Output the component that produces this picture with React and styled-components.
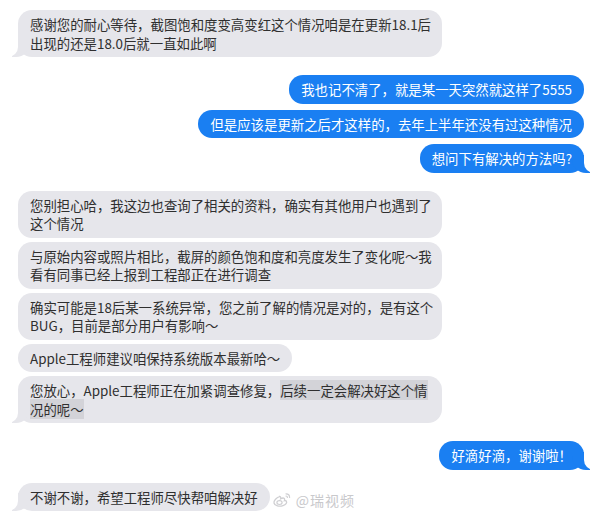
import styled, { createGlobalStyle, css } from 'styled-components';

const GlobalStyle = createGlobalStyle`
  body {
    margin: 0;
    background: #ffffff;
    font-family: "Noto Sans CJK SC", "Noto Sans", sans-serif;
  }
`;

const Thread = styled.div`
  width: 600px;
  height: 520px;
  box-sizing: border-box;
  padding: 10px 16px 0 18px;
  display: flex;
  flex-direction: column;
  overflow: hidden;
`;

const Group = styled.div`
  display: flex;
  flex-direction: column;
  align-items: ${(p) => (p.$mine ? 'flex-end' : 'flex-start')};
  gap: ${(p) => p.$gap || 5}px;
  margin-top: ${(p) => p.$top || 0}px;
`;

const Row = styled.div`
  display: flex;
  align-items: center;
`;

const tailLeft = css`
  &::before,
  &::after {
    content: '';
    position: absolute;
    bottom: 0;
    height: 18px;
  }
  &::before {
    left: -6px;
    width: 18px;
    background: #e6e6eb;
    border-bottom-right-radius: 14px;
  }
  &::after {
    left: -10px;
    width: 10px;
    background: #ffffff;
    border-bottom-right-radius: 10px;
  }
`;

const tailRight = css`
  &::before,
  &::after {
    content: '';
    position: absolute;
    bottom: 0;
    height: 18px;
  }
  &::before {
    right: -6px;
    width: 18px;
    background: #1a7ff2;
    border-bottom-left-radius: 14px;
  }
  &::after {
    right: -10px;
    width: 10px;
    background: #ffffff;
    border-bottom-left-radius: 10px;
  }
`;

const Bubble = styled.div`
  position: relative;
  box-sizing: border-box;
  width: ${(p) => (p.$wide ? '424px' : 'auto')};
  padding: 5px 12px;
  border-radius: 14px;
  font-size: 13.4px;
  line-height: 18.5px;
  white-space: nowrap;
  background: ${(p) => (p.$mine ? '#1a7ff2' : '#e6e6eb')};
  color: ${(p) => (p.$mine ? '#ffffff' : '#2f2f2f')};
  ${(p) => p.$tail && (p.$mine ? tailRight : tailLeft)}
`;

const Marked = styled.span`
  background: #d3d3d8;
`;

const Watermark = styled.div`
  display: flex;
  align-items: center;
  gap: 4px;
  margin-left: 2px;
  margin-top: 6px;
  color: #c9c9cc;
  font-size: 14px;
  letter-spacing: 1px;
`;

const WeiboLogo = () => (
  <svg width="20" height="16" viewBox="0 0 20 16" fill="none">
    <path
      d="M8 4.5C4.5 5.5 1.5 8.5 2 11c.6 3 5.5 3.8 9 2.6 3-1 4.2-3 3.4-4.3-.5-.8-1.5-.8-2-.6.4-1.2.3-2.3-.7-2.6-1-.3-2.2.2-3 .7.3-1 .1-2.6-1.7-2.3z"
      stroke="#cfcfd2"
      strokeWidth="1.3"
    />
    <ellipse cx="7.5" cy="10.6" rx="2.6" ry="1.9" stroke="#cfcfd2" strokeWidth="1.2" />
    <path d="M14 1.8c2 0 3.6 1.6 3.6 3.6M14 4c.8 0 1.4.6 1.4 1.4" stroke="#cfcfd2" strokeWidth="1.2" strokeLinecap="round" />
  </svg>
);

const Lines = ({ lines }) =>
  lines.map((line, i) => (
    <span key={i}>
      {i > 0 && <br />}
      {line}
    </span>
  ));

export default function App() {
  return (
    <>
      <GlobalStyle />
      <Thread>
        <Group>
          <Bubble $wide $tail>
            <Lines
              lines={[
                '感谢您的耐心等待，截图饱和度变高变红这个情况咱是在更新18.1后',
                '出现的还是18.0后就一直如此啊',
              ]}
            />
          </Bubble>
        </Group>

        <Group $mine $top={18} $gap={6}>
          <Bubble $mine>我也记不清了，就是某一天突然就这样了5555</Bubble>
          <Bubble $mine>但是应该是更新之后才这样的，去年上半年还没有过这种情况</Bubble>
          <Bubble $mine $tail>想问下有解决的方法吗?</Bubble>
        </Group>

        <Group $top={18} $gap={4}>
          <Bubble $wide>
            <Lines
              lines={[
                '您别担心哈，我这边也查询了相关的资料，确实有其他用户也遇到了',
                '这个情况',
              ]}
            />
          </Bubble>
          <Bubble $wide>
            <Lines
              lines={[
                '与原始内容或照片相比，截屏的颜色饱和度和亮度发生了变化呢～我',
                '看有同事已经上报到工程部正在进行调查',
              ]}
            />
          </Bubble>
          <Bubble $wide>
            <Lines
              lines={[
                '确实可能是18后某一系统异常，您之前了解的情况是对的，是有这个',
                'BUG，目前是部分用户有影响～',
              ]}
            />
          </Bubble>
          <Bubble>Apple工程师建议咱保持系统版本最新哈～</Bubble>
          <Bubble $wide $tail>
            您放心，Apple工程师正在加紧调查修复，<Marked>后续一定会解决好这个情</Marked>
            <br />
            <Marked>况的呢～</Marked>
          </Bubble>
        </Group>

        <Group $mine $top={18}>
          <Bubble $mine $tail>好滴好滴，谢谢啦！</Bubble>
        </Group>

        <Group $top={13}>
          <Row>
            <Bubble $tail>不谢不谢，希望工程师尽快帮咱解决好</Bubble>
            <Watermark>
              <WeiboLogo />
              @瑞视频
            </Watermark>
          </Row>
        </Group>
      </Thread>
    </>
  );
}
